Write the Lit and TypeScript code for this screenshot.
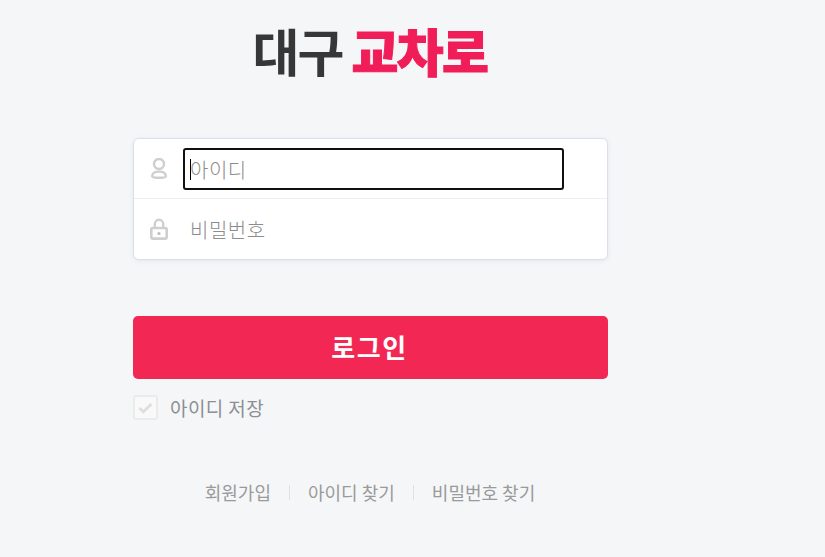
import { LitElement, html, css } from "lit";
import { customElement } from "lit/decorators.js";

@customElement("app-root")
export class AppRoot extends LitElement {
  static styles = css`
    :host {
      display: block;
      width: 825px;
      height: 557px;
      overflow: hidden;
      background: #f5f6f8;
      font-family: "Noto Sans CJK KR", "Noto Sans", sans-serif;
    }
    .wrap {
      width: 475px;
      margin-left: 133px;
      display: flex;
      flex-direction: column;
    }
    .logo {
      height: 138px;
      display: flex;
      justify-content: center;
      align-items: flex-start;
      padding-top: 12px;
      padding-right: 1px;
      box-sizing: border-box;
      font-size: 51px;
      line-height: 76px;
      white-space: nowrap;
      gap: 9px;
    }
    .logo .a { color: #373737; font-weight: 700; letter-spacing: -2px; }
    .logo .b {
      color: #f11d58;
      font-weight: 900;
      letter-spacing: -1.6px;
      -webkit-text-stroke: 1px #f11d58;
    }
    .card {
      height: 122px;
      box-sizing: border-box;
      background: #fff;
      border: 1px solid #dcdfe8;
      border-radius: 6px;
      box-shadow: 0 1px 4px rgba(190, 195, 215, 0.3);
      display: flex;
      flex-direction: column;
    }
    .row {
      display: flex;
      align-items: center;
      padding-left: 49px;
      box-sizing: border-box;
    }
    .r1 { height: 59px; }
    .r2 { height: 61px; border-top: 1px solid #eceef1; }
    .ico {
      position: relative;
      left: -33px;
      width: 0;
      display: flex;
    }
    .ico svg { flex: none; }
    input {
      width: 381px;
      height: 42px;
      box-sizing: border-box;
      border: 0;
      outline: none;
      background: transparent;
      padding: 0 7px;
      font: 300 20px "Noto Sans CJK KR", sans-serif;
      letter-spacing: 0.5px;
      color: #333;
      border-radius: 3px;
    }
    input::placeholder { color: #8c8c8c; opacity: 1; }
    input.focus {
      border: 2px solid #101010;
      padding: 0 5px;
      margin-top: 1px;
    }
    .caret {
      position: absolute;
      width: 1px;
      height: 21px;
      background: #000;
      left: 190px;
      top: 159px;
    }
    .login {
      margin-top: 56px;
      height: 63px;
      border: 0;
      border-radius: 5px;
      background: #f32753;
      color: #fff;
      font: 700 26px/58px "Noto Sans CJK KR", sans-serif;
      letter-spacing: 1.5px;
      padding: 0 2px 1px 0;
    }
    .save {
      margin-top: 16px;
      display: flex;
      align-items: center;
      gap: 12px;
      color: #8b8f96;
      font-size: 19px;
      letter-spacing: 0.4px;
      line-height: 25px;
    }
    .box {
      width: 25px;
      height: 25px;
      box-sizing: border-box;
      border: 2px solid #ebebec;
      border-radius: 3px;
      background: #f9f9fa;
      display: flex;
      align-items: center;
      justify-content: center;
    }
    .links {
      margin-top: 59px;
      display: flex;
      justify-content: center;
      align-items: center;
      color: #9a9a9a;
      font-size: 18px;
      line-height: 26px;
      padding-right: 1px;
    }
    .sep {
      width: 1px;
      height: 15px;
      background: #dfe0e2;
      margin: 0 18px;
    }
  `;

  render() {
    return html`
      <div class="wrap">
        <div class="logo"><span class="a">대구</span><span class="b">교차로</span></div>
        <div class="card">
          <div class="row r1">
            <span class="ico">
              <svg width="18" height="22" viewBox="0 0 18 22" fill="none" stroke="#cfcfcf" stroke-width="2.4">
                <circle cx="9" cy="6" r="5" />
                <path d="M2.2 18.2C2.2 15 5 13.6 9 13.6s6.8 1.4 6.8 4.6c0 1.2-3 1.6-6.8 1.6s-6.8-.4-6.8-1.6z" />
              </svg>
            </span>
            <input class="focus" placeholder="아이디" />
          </div>
          <div class="row r2">
            <span class="ico">
              <svg width="18" height="22" viewBox="0 0 18 22" fill="none">
                <path d="M4.8 10V6a4.2 4.2 0 0 1 8.4 0v4" stroke="#cfcfcf" stroke-width="2.4" />
                <rect x="1.3" y="10" width="15.4" height="10.6" rx="1.5" stroke="#cfcfcf" stroke-width="2.6" />
                <circle cx="9" cy="15.5" r="1.6" fill="#bdbdbd" />
              </svg>
            </span>
            <input placeholder="비밀번호" />
          </div>
        </div>
        <button class="login">로그인</button>
        <div class="save">
          <span class="box">
            <svg width="15" height="12" viewBox="0 0 15 12" fill="none">
              <path d="M1.5 6l3.8 3.8L13.5 2" stroke="#dedede" stroke-width="2.8" />
            </svg>
          </span>
          <span>아이디 저장</span>
        </div>
        <div class="links">
          <span>회원가입</span><i class="sep"></i><span>아이디 찾기</span><i class="sep"></i><span>비밀번호 찾기</span>
        </div>
      </div>
      <div class="caret"></div>
    `;
  }
}
